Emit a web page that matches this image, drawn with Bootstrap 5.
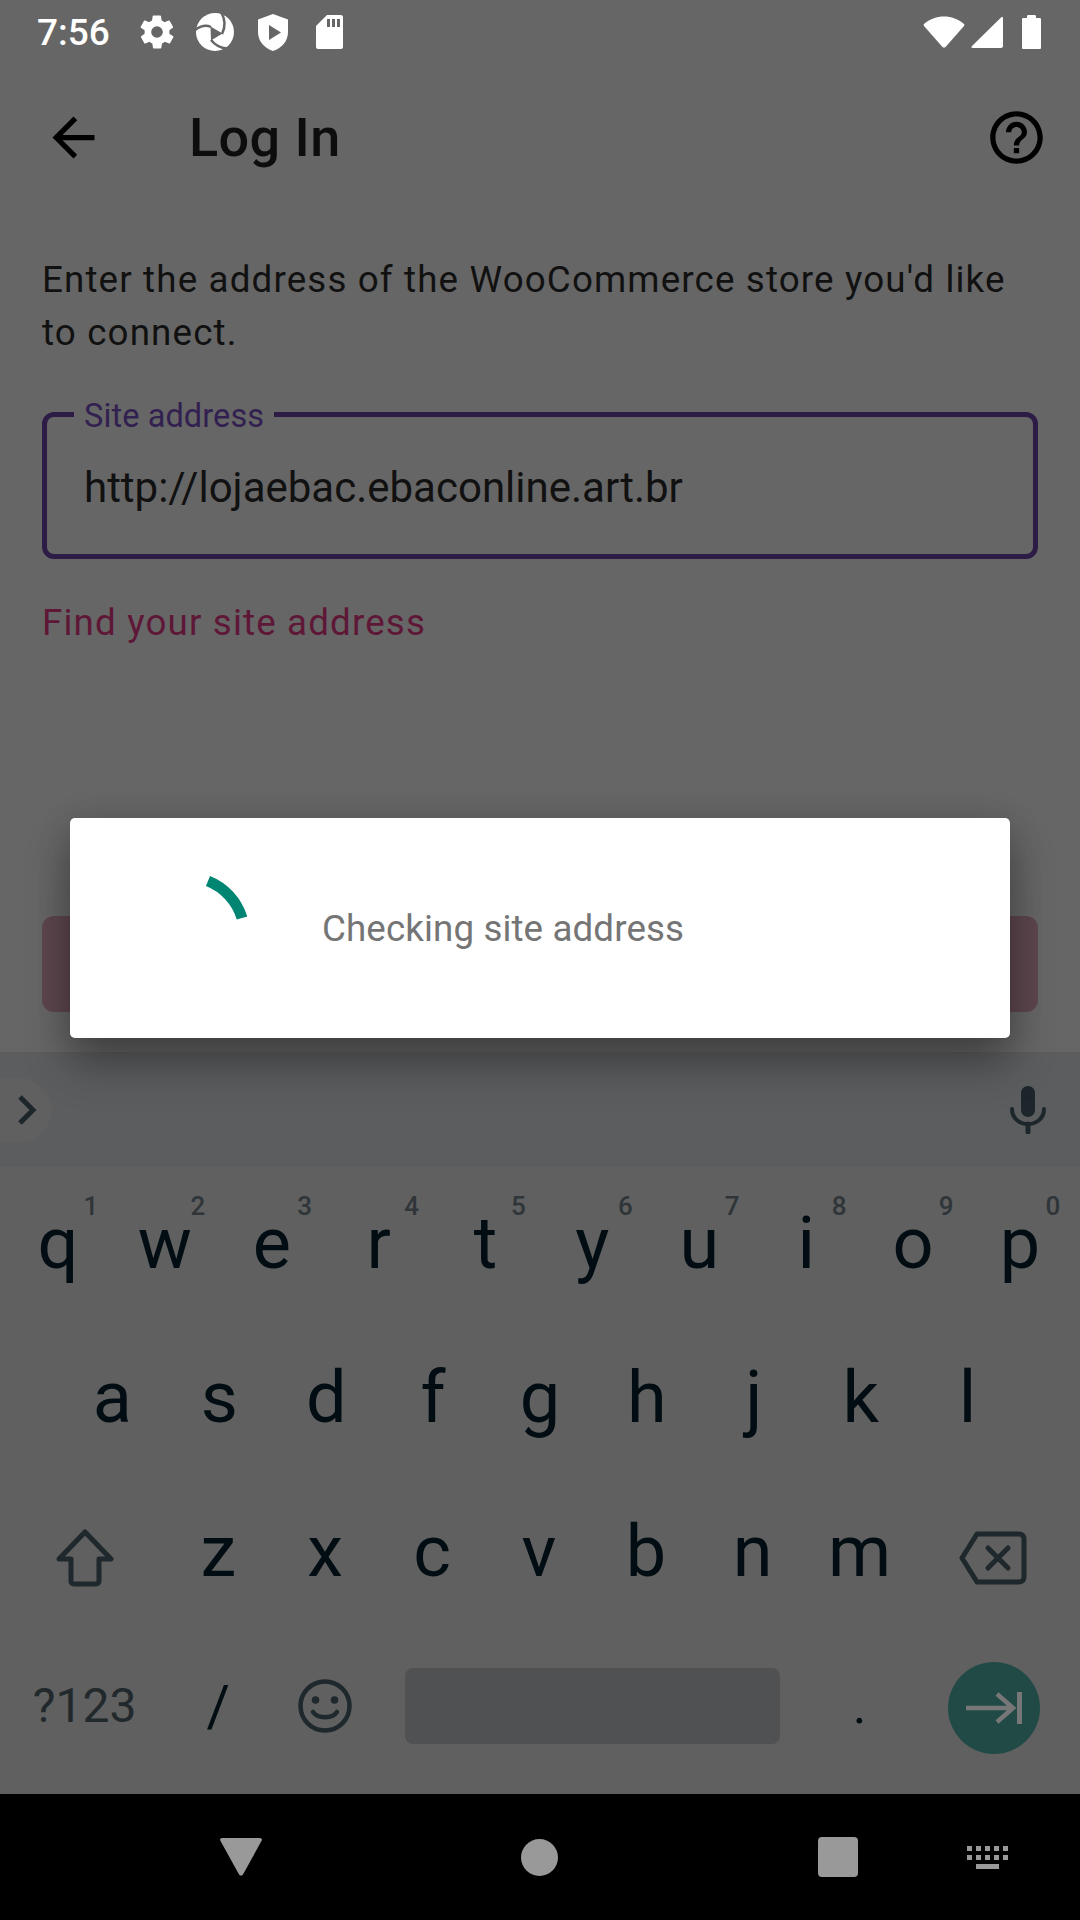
<!DOCTYPE html>
<html lang="en">
<head>
<meta charset="UTF-8">
<title>Log In</title>
<link href="https://cdn.jsdelivr.net/npm/bootstrap@5.3.0/dist/css/bootstrap.min.css" rel="stylesheet">
<style>
    body { margin: 0; background: #666; font-family: Roboto, sans-serif; }
    .app-screen { width: 1080px; height: 1920px; background: #666; overflow: hidden; }

    /* status bar */
    .status-strip { height: 64px; padding: 0 39px 0 37px; color: #fff; }
    .status-time { font-size: 37px; font-weight: 500; width: 100px; line-height: 1; }
    .status-left svg { display: block; }
    .status-right svg { display: block; }

    /* toolbar */
    .top-bar { height: 147px; padding: 0 32px 0 42px; color: #0d0d0d; }
    .top-title { font-size: 54px; font-weight: 500; line-height: 1; margin: 0 0 0 84px; letter-spacing: .4px; color: #0d0d0d; }

    /* form */
    .form-area { padding: 42px 42px 0; }
    .intro-text { font-size: 36.75px; line-height: 53px; letter-spacing: 1.14px; color: #111; margin: 0 0 53px; }
    .site-field { height: 147px; border: 5px solid #2c1c46; border-radius: 12px; padding: 4px 37px 0; }
    .site-label { position: absolute; left: 27px; top: -19px; background: linear-gradient(#666, #666) 0 0 / 100% 21px no-repeat; padding: 0 10px; font-size: 32.5px; line-height: 36px; letter-spacing: .1px; color: #322150; }
    .site-value { font-size: 42px; color: #111; }
    .find-link { font-size: 36.75px; line-height: 44px; letter-spacing: 1.15px; color: #5e1737; margin-top: 42px; text-decoration: none; }
    .continue-btn { height: 96px; margin-top: 271px; background: #5e474e; border: 0; border-radius: 12px; }

    /* dialog */
    .check-dialog { position: absolute; left: 70px; top: 818px; width: 940px; height: 220px; background: #fff; border: 0; border-radius: 5px; padding-left: 52px; z-index: 5;
        box-shadow: 0 26px 46px rgba(0, 0, 0, .32), 0 4px 34px rgba(0, 0, 0, .14); }
    .check-text { font-size: 36.75px; color: #757575; margin-left: 74px; margin-top: 2px; letter-spacing: .1px; }

    /* keyboard */
    .kb-wrap { height: 742px; background: #5f605f; padding: 0 4.5px 11px; }
    .kb-strip { height: 115px; margin: 0 -4.5px; padding-right: 34px; background: #5c5d5f; }
    .kb-pill { width: 52px; height: 64px; background: #606060; border-radius: 0 32px 32px 0; padding-left: 17px; }
    .kb-line { height: 154px; }
    .kb-key { width: 106.9px; height: 154px; font-size: 72px; color: #010d12; line-height: 1; }
    .kb-wide { width: 160.35px; }
    .kb-hint { position: absolute; font-size: 26px; font-weight: 500; color: #2f3539; line-height: 1; left: 79px; top: 26px; }
    .kb-low { margin-top: 11px; }
    .kb-sym { font-size: 48px; color: #22292c; font-weight: 400; }
    .kb-slash { font-size: 57px; }
    .kb-space { width: 427.6px; height: 154px; padding: 0 26px; }
    .kb-spacebar { width: 100%; height: 76px; background: #505153; border-radius: 8px; }
    .kb-dot { font-size: 52px; }
    .kb-enter { width: 92px; height: 92px; border-radius: 50%; background: #214a47; margin: 3px 0 0 2px; }

    /* nav bar */
    .nav-strip { height: 126px; background: #000; padding-left: 220px; }
    .nav-back { margin-right: 259px; }
    .nav-home { margin-right: 260px; }
    .nav-recent { width: 40px; height: 40px; background: #999; border-radius: 4px; margin-right: 109px; }
    .nav-strip svg { display: block; }
</style>
</head>
<body>
<div class="app-screen d-flex flex-column position-relative">

    <div class="status-strip d-flex align-items-center justify-content-between flex-shrink-0">
        <div class="status-left d-flex align-items-center">
            <span class="status-time">7:56</span>
            <svg width="40" height="40" viewBox="0 0 24 24" fill="#fff" style="margin-right:18px"><path d="M19.4 13a7.6 7.6 0 0 0 0-2l2.1-1.6a.5.5 0 0 0 .1-.6l-2-3.5a.5.5 0 0 0-.6-.2l-2.5 1a7.3 7.3 0 0 0-1.7-1l-.4-2.6a.5.5 0 0 0-.5-.4h-4a.5.5 0 0 0-.5.4l-.4 2.6a7.7 7.7 0 0 0-1.7 1l-2.5-1a.5.5 0 0 0-.6.2l-2 3.5a.5.5 0 0 0 .1.6L4.6 11a7.6 7.6 0 0 0 0 2l-2.1 1.6a.5.5 0 0 0-.1.6l2 3.5c.1.2.4.3.6.2l2.5-1c.5.4 1.1.7 1.7 1l.4 2.6c0 .2.2.4.5.4h4c.3 0 .5-.2.5-.4l.4-2.6c.6-.3 1.2-.6 1.700-1l2.5 1c.2.1.5 0 .6-.2l2-3.5a.5.5 0 0 0-.1-.6L19.4 13zM12 15.5a3.5 3.5 0 1 1 0-7 3.500 3.500 0 0 1 0 7z"/></svg>
            <svg width="40" height="40" viewBox="0 0 40 40" style="margin-right:23px">
                <circle cx="20" cy="20" r="19" fill="#fff"/>
                <path d="M15.500 14.500L27.500 21.500L16 28.500z" fill="#666"/>
                <path d="M27 22C30.500 15 30.500 8 26.500 1" fill="none" stroke="#666" stroke-width="2.500"/>
                <path d="M16 15C11 12.500 6 13.500 0 18" fill="none" stroke="#666" stroke-width="2.500"/>
                <path d="M16 28C20 33 25 36 32 36.500" fill="none" stroke="#666" stroke-width="2.500"/>
            </svg>
            <svg width="30" height="37" viewBox="0 0 30 37" style="margin-right:28px"><path d="M15 0L30 5.500V18C30 27 24 34 15 37C6 34 0 27 0 18V5.500z" fill="#fff"/><path d="M11 11L23 18.500L11 26z" fill="#666"/></svg>
            <svg width="27" height="34" viewBox="0 0 27 34"><path d="M11 0H25C26 0 27 1 27 2V32C27 33 26 34 25 34H2C1 34 0 33 0 32V11z" fill="#fff"/><path d="M11 4h3v8h-3zM16 4h3v8h-3zM21 4h3v8h-3z" fill="#666"/></svg>
        </div>
        <div class="status-right d-flex align-items-center">
            <svg width="42" height="32" viewBox="0 0 42 32" style="margin-right:6px"><path d="M1 8C12 -2 30 -2 41 8C41.500 8.500 41.500 9 41 10L23 30.500C22 32 20 32 19 30.500L1 10C0.500 9 0.500 8.500 1 8z" fill="#fff"/></svg>
            <svg width="32" height="32" viewBox="0 0 32 32" style="margin-right:19px"><path d="M30 1.500C31 .5 32 1 32 2V30C32 31 31 32 30 32H2C0 32 0 31 1 30z" fill="#fff"/></svg>
            <svg width="19" height="34" viewBox="0 0 19 34"><path d="M5 3V1.500C5 .5 5.500 0 6.500 0H12.500C13.500 0 14 .5 14 1.500V3H17.500C18.500 3 19 3.500 19 4.500V32.500C19 33.500 18.500 34 17.500 34H1.500C.5 34 0 33.500 0 32.500V4.500C0 3.500 .5 3 1.500 3z" fill="#fff"/></svg>
        </div>
    </div>

    <div class="top-bar d-flex align-items-center flex-shrink-0">
        <svg width="63" height="63" viewBox="0 0 24 24" fill="#000"><path d="M20 11H7.830l5.590-5.590L12 4l-8 8 8 8 1.410-1.410L7.830 13H20v-2z"/></svg>
        <h1 class="top-title">Log In</h1>
        <svg class="ms-auto" width="63" height="63" viewBox="0 0 24 24" fill="#000"><path d="M11 18h2v-2h-2v2zm1-16C6.480 2 2 6.480 2 12s4.480 10 10 10 10-4.480 10-10S17.520 2 12 2zm0 18c-4.410 0-8-3.590-8-8s3.590-8 8-8 8 3.590 8 8-3.590 8-8 8zm0-14c-2.210 0-4 1.790-4 4h2c0-1.100.9-2 2-2s2 .9 2 2c0 2-3 1.750-3 5h2c0-2.250 3-2.500 3-5 0-2.210-1.790-4-4-4z"/></svg>
    </div>

    <div class="form-area">
        <p class="intro-text">Enter the address of the WooCommerce store you'd like to connect.</p>
        <div class="site-field position-relative d-flex align-items-center">
            <label class="site-label">Site address</label>
            <span class="site-value">http://lojaebac.ebaconline.art.br</span>
        </div>
        <a class="find-link d-block">Find your site address</a>
        <button class="continue-btn btn w-100 d-block" type="button"></button>
    </div>

    <div class="check-dialog card flex-row align-items-center">
        <svg width="126" height="126" viewBox="0 0 126 126" class="flex-shrink-0"><path d="M86 16A58 58 0 0 1 120 53" fill="none" stroke="#008573" stroke-width="11"/></svg>
        <span class="check-text">Checking site address</span>
    </div>

    <div class="kb-wrap mt-auto flex-shrink-0">
        <div class="kb-strip d-flex align-items-center justify-content-between">
            <div class="kb-pill d-flex align-items-center">
                <svg width="22" height="32" viewBox="0 0 22 32"><path d="M3 3L16 16L3 29" fill="none" stroke="#1d262a" stroke-width="5"/></svg>
            </div>
            <svg width="36" height="48" viewBox="0 0 36 48"><rect x="11" y="0" width="14" height="31" rx="7" fill="#1d262a"/><path d="M2 23C2 32 9 38 18 38C27 38 34 32 34 23" fill="none" stroke="#1d262a" stroke-width="4" stroke-linecap="round"/><path d="M18 38V46" stroke="#1d262a" stroke-width="5" stroke-linecap="round"/></svg>
        </div>

        <div class="kb-line d-flex">
            <div class="kb-key position-relative d-flex align-items-center justify-content-center">q<span class="kb-hint">1</span></div>
            <div class="kb-key position-relative d-flex align-items-center justify-content-center">w<span class="kb-hint">2</span></div>
            <div class="kb-key position-relative d-flex align-items-center justify-content-center">e<span class="kb-hint">3</span></div>
            <div class="kb-key position-relative d-flex align-items-center justify-content-center">r<span class="kb-hint">4</span></div>
            <div class="kb-key position-relative d-flex align-items-center justify-content-center">t<span class="kb-hint">5</span></div>
            <div class="kb-key position-relative d-flex align-items-center justify-content-center">y<span class="kb-hint">6</span></div>
            <div class="kb-key position-relative d-flex align-items-center justify-content-center">u<span class="kb-hint">7</span></div>
            <div class="kb-key position-relative d-flex align-items-center justify-content-center">i<span class="kb-hint">8</span></div>
            <div class="kb-key position-relative d-flex align-items-center justify-content-center">o<span class="kb-hint">9</span></div>
            <div class="kb-key position-relative d-flex align-items-center justify-content-center">p<span class="kb-hint">0</span></div>
        </div>

        <div class="kb-line d-flex justify-content-center">
            <div class="kb-key d-flex align-items-center justify-content-center">a</div>
            <div class="kb-key d-flex align-items-center justify-content-center">s</div>
            <div class="kb-key d-flex align-items-center justify-content-center">d</div>
            <div class="kb-key d-flex align-items-center justify-content-center">f</div>
            <div class="kb-key d-flex align-items-center justify-content-center">g</div>
            <div class="kb-key d-flex align-items-center justify-content-center">h</div>
            <div class="kb-key d-flex align-items-center justify-content-center">j</div>
            <div class="kb-key d-flex align-items-center justify-content-center">k</div>
            <div class="kb-key d-flex align-items-center justify-content-center">l</div>
        </div>

        <div class="kb-line d-flex">
            <div class="kb-key kb-wide d-flex align-items-center justify-content-center">
                <svg class="kb-low" width="60" height="58" viewBox="0 0 60 58"><path d="M30 3L56 30H44V52C44 53.500 43 55 41 55H19C17 55 16 53.500 16 52V30H4z" fill="none" stroke="#1f282c" stroke-width="5" stroke-linejoin="round"/></svg>
            </div>
            <div class="kb-key d-flex align-items-center justify-content-center">z</div>
            <div class="kb-key d-flex align-items-center justify-content-center">x</div>
            <div class="kb-key d-flex align-items-center justify-content-center">c</div>
            <div class="kb-key d-flex align-items-center justify-content-center">v</div>
            <div class="kb-key d-flex align-items-center justify-content-center">b</div>
            <div class="kb-key d-flex align-items-center justify-content-center">n</div>
            <div class="kb-key d-flex align-items-center justify-content-center">m</div>
            <div class="kb-key kb-wide d-flex align-items-center justify-content-center">
                <svg class="kb-low" width="68" height="54" viewBox="0 0 68 54"><path d="M18 3H60C63 3 65 5 65 8V46C65 49 63 51 60 51H18L3 27z" fill="none" stroke="#1f282c" stroke-width="5" stroke-linejoin="round"/><path d="M29 17L49 37M49 17L29 37" stroke="#1f282c" stroke-width="5" stroke-linecap="round"/></svg>
            </div>
        </div>

        <div class="kb-line d-flex">
            <div class="kb-key kb-wide kb-sym d-flex align-items-center justify-content-center">?123</div>
            <div class="kb-key kb-slash d-flex align-items-center justify-content-center">/</div>
            <div class="kb-key d-flex align-items-center justify-content-center">
                <svg width="54" height="54" viewBox="0 0 54 54"><circle cx="27" cy="27" r="24.500" fill="none" stroke="#1f282c" stroke-width="4.500"/><circle cx="17.500" cy="21" r="3.800" fill="#1f282c"/><circle cx="36.500" cy="21" r="3.800" fill="#1f282c"/><path d="M15 33C20 40 34 40 39 33" fill="none" stroke="#1f282c" stroke-width="4.500" stroke-linecap="round"/></svg>
            </div>
            <div class="kb-space d-flex align-items-center"><div class="kb-spacebar"></div></div>
            <div class="kb-key kb-dot d-flex align-items-center justify-content-center">.</div>
            <div class="kb-key kb-wide d-flex align-items-center justify-content-center">
                <div class="kb-enter d-flex align-items-center justify-content-center">
                    <svg width="56" height="34" viewBox="0 0 56 34"><path d="M0 17H48M31 3L47 17L31 31" fill="none" stroke="#777" stroke-width="4.500"/><path d="M53.500 1V33" stroke="#777" stroke-width="5"/></svg>
                </div>
            </div>
        </div>
    </div>

    <div class="nav-strip d-flex align-items-center flex-shrink-0">
        <svg class="nav-back" width="42" height="38" viewBox="0 0 42 38"><path d="M2 0H40C41.500 0 42 1 42 2L23 36.500C22 38 20 38 19 36.500L0 2C0 1 .5 0 2 0z" fill="#999"/></svg>
        <svg class="nav-home" width="37" height="37" viewBox="0 0 37 37"><circle cx="18.500" cy="18.500" r="18.500" fill="#999"/></svg>
        <div class="nav-recent"></div>
        <svg width="41" height="23" viewBox="0 0 41 23" fill="#999"><path d="M0 0h5v5H0zM9 0h5v5H9zM18 0h5v5h-5zM27 0h5v5h-5zM36 0h5v5h-5zM0 9h5v5H0zM9 9h5v5H9zM18 9h5v5h-5zM27 9h5v5h-5zM36 9h5v5h-5zM9 18h23v5H9z"/></svg>
    </div>
</div>
<script src="https://cdn.jsdelivr.net/npm/bootstrap@5.3.0/dist/js/bootstrap.bundle.min.js"></script>
</body>
</html>
